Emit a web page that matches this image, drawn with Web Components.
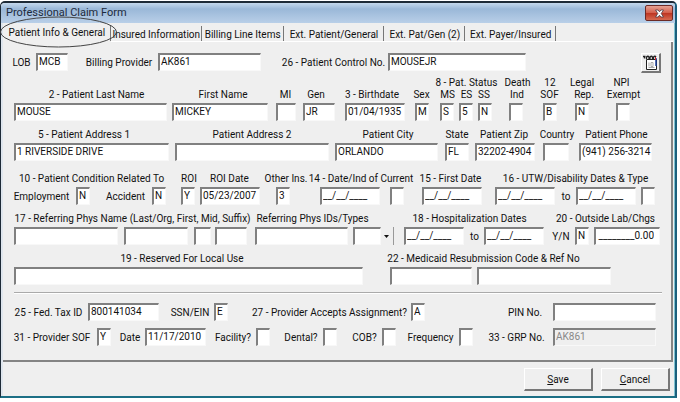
<!DOCTYPE html>
<html lang="en">
<head>
<meta charset="utf-8">
<title>Professional Claim Form</title>
<style>
    body {
        margin: 1px 3px 0 0;
        background: #fff;
        color: #111;
        font: 10px/13px Roboto, "Liberation Sans", sans-serif;
    }
</style>
</head>
<body>
<claim-window heading="Professional Claim Form">
    <claim-tabs slot="tabs"></claim-tabs>
    <claim-header></claim-header>
    <claim-patient></claim-patient>
    <claim-dates></claim-dates>
    <claim-provider></claim-provider>
    <claim-actions slot="actions"></claim-actions>
</claim-window>

<script>
// Every line is a 650 unit ruler: --w is the width of an item, --g the gap before it.
const formStyles = `
    :host { display: block; }
    * { box-sizing: border-box; }
    .line { display: flex; align-items: center; }
    .line > * {
        flex: none;
        min-width: 0;
        width: calc(var(--w) / 650 * 100%);
        margin: 0 0 0 calc(var(--g, 0) / 650 * 100%);
    }
    .captions { height: 11px; }
    .captions.last { height: 15px; align-items: flex-start; }
    label, .text {
        display: flex;
        justify-content: center;
        white-space: nowrap;
    }
    input {
        height: 18px;
        padding: 0 0 2px 1px;
        border: 1px solid #f8f8f8;
        border-top: 2px solid #808080;
        border-left: 2px solid #808080;
        border-radius: 0;
        outline: none;
        background: #fff;
        color: #111;
        font: inherit;
    }
    input:disabled { background: #efefef; color: #888; }
    input.amount { text-align: right; padding-right: 5px; }
    .block { margin-bottom: 7px; }
`;

class ClaimWindow extends HTMLElement {
    constructor() {
        super();
        this.attachShadow({ mode: 'open' });
    }

    connectedCallback() {
        this.shadowRoot.innerHTML = `
        <style>
            :host {
                display: block;
                background: #efefef;
                border: 1px solid #1d2a36;
                border-top-width: 2px;
                border-right: 2px solid #1c5f7c;
                border-bottom: 2px solid #1c6f85;
                border-radius: 5px 5px 0 0;
            }
            header {
                display: flex;
                align-items: center;
                justify-content: space-between;
                height: 20px;
                padding: 0 2px 0 5px;
                background: linear-gradient(#c4d8ec, #9ab8d8 30%, #b9cfe8);
                border-radius: 4px 4px 0 0;
            }
            h1 {
                margin: 0;
                color: #1c2a3c;
                font: 11px/16px Roboto, "Liberation Sans", sans-serif;
            }
            .close {
                display: flex;
                align-items: center;
                justify-content: center;
                width: 28px;
                height: 16px;
                padding: 0;
                border: 1px solid #6b2a26;
                border-radius: 2px;
                background: linear-gradient(#e5a193, #d4604c 48%, #bd3522 52%, #d66a50);
            }
            .body {
                padding-right: 1px;
                border-left: 2px solid #dfe6ee;
                border-right: 1px solid #7fc3d2;
            }
            main {
                padding: 11px 9px 14px;
                border-right: 2px solid #848484;
                border-bottom: 2px solid #848484;
            }
            footer { padding: 6px 3px 5px; }
        </style>

        <header>
            <h1>${this.getAttribute('heading')}</h1>
            <button class="close" aria-label="Close">
                <svg width="11" height="9" viewBox="0 0 11 9">
                    <path d="M1.5 1h2.6l1.4 1.8L6.9 1h2.6L7.2 4.5 9.5 8H6.9L5.5 6.2 4.1 8H1.5l2.3-3.5z" fill="#fff" stroke="#4b3b44" stroke-width=".8"/>
                </svg>
            </button>
        </header>
        <div class="body">
            <slot name="tabs"></slot>
            <main><slot></slot></main>
            <footer><slot name="actions"></slot></footer>
        </div>
        `;
    }
}
customElements.define('claim-window', ClaimWindow);

class ClaimTabs extends HTMLElement {
    constructor() {
        super();
        this.attachShadow({ mode: 'open' });
    }

    connectedCallback() {
        this.shadowRoot.innerHTML = `
        <style>
            :host { display: block; position: relative; }
            nav { display: flex; height: 19px; }
            nav::after { content: ""; flex: 1; border-bottom: 1px solid #fff; }
            button {
                flex: none;
                box-sizing: border-box;
                width: calc(var(--w) / 671 * 100%);
                padding: 4px 0 0;
                border: 0;
                border-bottom: 1px solid #fff;
                background: linear-gradient(#777, #777) right 3px / 1px 15px no-repeat;
                background-origin: border-box;
                color: inherit;
                font: inherit;
                white-space: nowrap;
            }
            button[aria-selected="true"] { padding: 0; border-bottom-color: #efefef; }
            .mark { position: absolute; left: -3px; top: -7px; pointer-events: none; }
        </style>

        <nav role="tablist">
            <button role="tab" aria-selected="true" style="--w:108">Patient Info &amp; General</button>
            <button role="tab" style="--w:91">Insured Information</button>
            <button role="tab" style="--w:82">Billing Line Items</button>
            <button role="tab" style="--w:101">Ext. Patient/General</button>
            <button role="tab" style="--w:81">Ext. Pat/Gen (2)</button>
            <button role="tab" style="--w:91">Ext. Payer/Insured</button>
        </nav>
        <svg class="mark" width="120" height="34" viewBox="0 0 120 34">
            <ellipse cx="58.5" cy="16" rx="58" ry="15" fill="none" stroke="#444" stroke-width="1"/>
        </svg>
        `;
    }
}
customElements.define('claim-tabs', ClaimTabs);

class ClaimHeader extends HTMLElement {
    constructor() {
        super();
        this.attachShadow({ mode: 'open' });
    }

    connectedCallback() {
        this.shadowRoot.innerHTML = `
        <style>
            ${formStyles}
            .line { height: 24px; align-items: flex-start; }
            label { padding-top: 3px; }
            button {
                height: 20px;
                padding: 0;
                border: 1px solid #fff;
                border-right: 2px solid #777;
                border-bottom: 2px solid #777;
                background: #efefef;
            }
            svg { display: block; }
        </style>

        <div class="line">
            <label for="lob" style="--w:19">LOB</label>
            <input id="lob" value="MCB" style="--g:5; --w:32">
            <label for="billing" style="--g:19; --w:64">Billing Provider</label>
            <input id="billing" value="AK861" style="--g:7; --w:103">
            <label for="control" style="--g:23; --w:99">26 - Patient Control No.</label>
            <input id="control" value="MOUSEJR" style="--g:5; --w:138">
            <button aria-label="Notes" style="--g:115; --w:20">
                <svg width="17" height="17" viewBox="0 0 17 17">
                    <path d="M4.5 5.5h10v10h-10z" fill="#fff" stroke="#222"/>
                    <path d="M14 4v8" stroke="#1d3f9a" stroke-width="1.5"/>
                    <path d="M13.5 3v3" stroke="#c22"/>
                    <path d="M1 2.5h2.500M2.500 4.500v-2M4.500 5V3q1.500-1.500 2.500 0v2M8 5V3q1.500-1.500 2.500 0v2M11.500 5V3q1.500-1.500 2.500 0" fill="none" stroke="#222" stroke-width="1.3"/>
                    <path d="M7 8.500v4M9 8.500h2v4H9zM6.500 13.500h6" fill="none" stroke="#aaa"/>
                </svg>
            </button>
        </div>
        `;
    }
}
customElements.define('claim-header', ClaimHeader);

class ClaimPatient extends HTMLElement {
    constructor() {
        super();
        this.attachShadow({ mode: 'open' });
    }

    connectedCallback() {
        this.shadowRoot.innerHTML = `
        <style>${formStyles}</style>

        <div class="block">
            <div class="line captions">
                <span class="text" style="--g:424; --w:61">8 - Pat. Status</span>
                <label for="death" style="--g:7; --w:27">Death</label>
                <label for="sof" style="--g:14; --w:10">12</label>
                <label for="rep" style="--g:15; --w:24">Legal</label>
                <label for="npi" style="--g:19; --w:17">NPI</label>
            </div>
            <div class="line captions last">
                <label for="last" style="--g:38; --w:93">2 - Patient Last Name</label>
                <label for="first" style="--g:57; --w:46">First Name</label>
                <label for="mi" style="--g:34; --w:11">MI</label>
                <label for="gen" style="--g:15; --w:20">Gen</label>
                <label for="birth" style="--g:20; --w:52">3 - Birthdate</label>
                <label for="sex" style="--g:15; --w:17">Sex</label>
                <label for="ms" style="--g:11; --w:13">MS</label>
                <label for="es" style="--g:7; --w:11">ES</label>
                <label for="ss" style="--g:6; --w:12">SS</label>
                <label for="death" style="--g:20; --w:14">Ind</label>
                <label for="sof" style="--g:17; --w:17">SOF</label>
                <label for="rep" style="--g:16; --w:20">Rep.</label>
                <label for="npi" style="--g:14; --w:31">Exempt</label>
            </div>
            <div class="line">
                <input id="last" value="MOUSE" style="--g:2; --w:153">
                <input id="first" value="MICKEY" style="--g:5; --w:96">
                <input id="mi" style="--g:8; --w:20">
                <input id="gen" value="JR" style="--g:7; --w:32">
                <input id="birth" value="01/04/1935" style="--g:10; --w:60">
                <input id="sex" value="M" style="--g:10; --w:14">
                <input id="ms" value="S" style="--g:11; --w:14">
                <input id="es" value="5" style="--g:5; --w:14">
                <input id="ss" value="N" style="--g:5; --w:14">
                <input id="death" style="--g:17; --w:14">
                <input id="sof" value="B" style="--g:20; --w:14">
                <input id="rep" value="N" style="--g:18; --w:14">
                <input id="npi" style="--g:27; --w:14">
            </div>
        </div>

        <div class="block">
            <div class="line captions last">
                <label for="address1" style="--g:28; --w:88">5 - Patient Address 1</label>
                <label for="address2" style="--g:86; --w:76">Patient Address 2</label>
                <label for="city" style="--g:74; --w:48">Patient City</label>
                <label for="state" style="--g:34; --w:22">State</label>
                <label for="zip" style="--g:13; --w:46">Patient Zip</label>
                <label for="country" style="--g:14; --w:32">Country</label>
                <label for="phone" style="--g:13; --w:61">Patient Phone</label>
            </div>
            <div class="line">
                <input id="address1" value="1 RIVERSIDE DRIVE" style="--g:2; --w:155">
                <input id="address2" style="--g:6; --w:154">
                <input id="city" value="ORLANDO" style="--g:6; --w:103">
                <input id="state" value="FL" style="--g:7; --w:24">
                <input id="zip" value="32202-4904" style="--g:6; --w:60">
                <input id="country" style="--g:8; --w:26">
                <input id="phone" value="(941) 256-3214" style="--g:10; --w:73">
            </div>
        </div>
        `;
    }
}
customElements.define('claim-patient', ClaimPatient);

class ClaimDates extends HTMLElement {
    constructor() {
        super();
        this.attachShadow({ mode: 'open' });
    }

    connectedCallback() {
        this.shadowRoot.innerHTML = `
        <style>
            ${formStyles}
            :host { padding-top: 4px; }
            button {
                display: flex;
                align-items: center;
                height: 18px;
                padding: 0;
                border: 0;
                border-right: 1px solid #999;
                background: none;
            }
        </style>

        <div class="block">
            <div class="line captions last">
                <span class="text" style="--g:8; --w:143">10 - Patient Condition Related To</span>
                <label for="roi" style="--g:18; --w:16">ROI</label>
                <label for="roidate" style="--g:12; --w:41">ROI Date</label>
                <label for="other" style="--g:14; --w:44">Other Ins.</label>
                <label for="current" style="--g:2; --w:102">14 - Date/Ind of Current</label>
                <label for="firstdate" style="--g:9; --w:59">15 - First Date</label>
                <label for="utw" style="--g:23; --w:145">16 - UTW/Disability Dates &amp; Type</label>
            </div>
            <div class="line">
                <label for="employment" style="--g:4; --w:51">Employment</label>
                <input id="employment" value="N" style="--g:9; --w:14">
                <label for="accident" style="--g:16; --w:39">Accident</label>
                <input id="accident" value="N" style="--g:7; --w:14">
                <input id="roi" value="Y" style="--g:15; --w:14">
                <input id="roidate" value="05/23/2007" style="--g:5; --w:60">
                <input id="other" value="3" style="--g:16; --w:14">
                <input id="current" value="__/__/____" style="--g:30; --w:60">
                <input aria-label="Current indicator" style="--g:10; --w:14">
                <input id="firstdate" value="__/__/____" style="--g:18; --w:60">
                <input id="utw" value="__/__/____" style="--g:13; --w:60">
                <label for="utwto" style="--g:7; --w:8">to</label>
                <input id="utwto" value="__/__/____" style="--g:6; --w:60">
                <input aria-label="Disability type" style="--g:5; --w:14">
            </div>
        </div>

        <div class="block">
            <div class="line captions last">
                <label for="physlast" style="--g:5; --w:231">17 - Referring Phys Name (Last/Org, First, Mid, Suffix)</label>
                <label for="physid" style="--g:9; --w:111">Referring Phys IDs/Types</label>
                <label for="hospital" style="--g:47; --w:109">18 - Hospitalization Dates</label>
                <label for="charges" style="--g:33; --w:97">20 - Outside Lab/Chgs</label>
            </div>
            <div class="line">
                <input id="physlast" style="--g:2; --w:104">
                <input aria-label="First name" style="--g:6; --w:64">
                <input aria-label="Middle initial" style="--g:6; --w:17">
                <input aria-label="Suffix" style="--g:4; --w:32">
                <input id="physid" style="--g:8; --w:93">
                <input aria-label="ID type" style="--g:5; --w:28">
                <button aria-label="Choose type" style="--g:3; --w:10">
                    <svg width="5" height="3" viewBox="0 0 5 3"><path d="M0 0h5L2.5 3z" fill="#111"/></svg>
                </button>
                <input id="hospital" value="__/__/____" style="--g:10; --w:60">
                <label for="hospitalto" style="--g:6; --w:9">to</label>
                <input id="hospitalto" value="__/__/____" style="--g:5; --w:60">
                <label for="lab" style="--g:8; --w:18">Y/N</label>
                <input id="lab" value="N" style="--g:5; --w:14">
                <input id="charges" class="amount" value="________0.00" style="--g:5; --w:66">
            </div>
        </div>

        <div class="block">
            <div class="line captions last">
                <label for="reserved" style="--g:108; --w:124">19 - Reserved For Local Use</label>
                <label for="medicaid" style="--g:146; --w:187">22 - Medicaid Resubmission Code &amp; Ref No</label>
            </div>
            <div class="line">
                <input id="reserved" style="--g:2; --w:349">
                <input id="medicaid" style="--g:27; --w:82">
                <input aria-label="Reference number" style="--g:5; --w:134">
            </div>
        </div>
        `;
    }
}
customElements.define('claim-dates', ClaimDates);

class ClaimProvider extends HTMLElement {
    constructor() {
        super();
        this.attachShadow({ mode: 'open' });
    }

    connectedCallback() {
        this.shadowRoot.innerHTML = `
        <style>
            ${formStyles}
            hr {
                height: 2px;
                margin: 0 0 9px 2px;
                border: 0;
                border-top: 1px solid #aaa;
                background: #fff;
            }
            .line + .line { margin-top: 7px; }
        </style>

        <hr>
        <div class="line">
            <label for="tax" style="--g:2; --w:69">25 - Fed. Tax ID</label>
            <input id="tax" value="800141034" style="--g:5; --w:71">
            <label for="ssn" style="--g:11; --w:40">SSN/EIN</label>
            <input id="ssn" value="E" style="--g:4; --w:14">
            <label for="assign" style="--g:26; --w:151">27 - Provider Accepts Assignment?</label>
            <input id="assign" value="A" style="--g:6; --w:14">
            <label for="pin" style="--g:83; --w:34">PIN No.</label>
            <input id="pin" style="--g:11; --w:103">
        </div>
        <div class="line">
            <label for="psof" style="--g:2; --w:76">31 - Provider SOF</label>
            <input id="psof" value="Y" style="--g:7; --w:14">
            <label for="date" style="--g:9; --w:20">Date</label>
            <input id="date" value="11/17/2010" style="--g:5; --w:61">
            <label for="facility" style="--g:10; --w:34">Facility?</label>
            <input id="facility" style="--g:6; --w:14">
            <label for="dental" style="--g:14; --w:34">Dental?</label>
            <input id="dental" style="--g:5; --w:14">
            <label for="cob" style="--g:15; --w:25">COB?</label>
            <input id="cob" style="--g:5; --w:14">
            <label for="frequency" style="--g:12; --w:45">Frequency</label>
            <input id="frequency" style="--g:6; --w:14">
            <label for="grp" style="--g:15; --w:57">33 - GRP No.</label>
            <input id="grp" value="AK861" disabled style="--g:8; --w:103">
        </div>
        `;
    }
}
customElements.define('claim-provider', ClaimProvider);

class ClaimActions extends HTMLElement {
    constructor() {
        super();
        this.attachShadow({ mode: 'open' });
    }

    connectedCallback() {
        this.shadowRoot.innerHTML = `
        <style>
            :host { display: flex; justify-content: flex-end; gap: 8px; }
            button {
                width: 69px;
                height: 23px;
                padding: 0;
                border: 1px solid #fff;
                border-right: 2px solid #777;
                border-bottom: 2px solid #777;
                background: #efefef;
                color: inherit;
                font: inherit;
            }
        </style>

        <button><u>S</u>ave</button>
        <button><u>C</u>ancel</button>
        `;
    }
}
customElements.define('claim-actions', ClaimActions);
</script>
</body>
</html>
